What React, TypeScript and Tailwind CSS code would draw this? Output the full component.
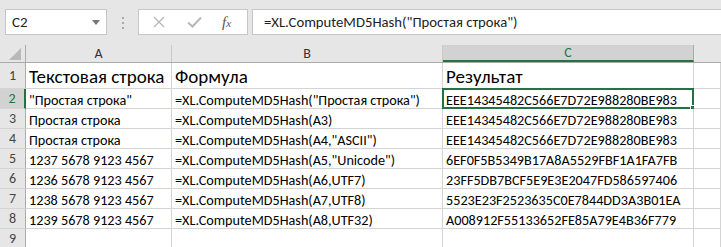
import React from 'react';

const FONT = { fontFamily: 'Calibri, Carlito, Lato, "Liberation Sans", sans-serif' };

const ROWS: [string, string, string][] = [
  ['"Простая строка"', '=XL.ComputeMD5Hash("Простая строка")', 'EEE14345482C566E7D72E988280BE983'],
  ['Простая строка', '=XL.ComputeMD5Hash(A3)', 'EEE14345482C566E7D72E988280BE983'],
  ['Простая строка', '=XL.ComputeMD5Hash(A4,"ASCII")', 'EEE14345482C566E7D72E988280BE983'],
  ['1237 5678 9123 4567', '=XL.ComputeMD5Hash(A5,"Unicode")', '6EF0F5B5349B17A8A5529FBF1A1FA7FB'],
  ['1236 5678 9123 4567', '=XL.ComputeMD5Hash(A6,UTF7)', '23FF5DB7BCF5E9E3E2047FD586597406'],
  ['1238 5678 9123 4567', '=XL.ComputeMD5Hash(A7,UTF8)', '5523E23F2523635C0E7844DD3A3B01EA'],
  ['1239 5678 9123 4567', '=XL.ComputeMD5Hash(A8,UTF32)', 'A008912F55133652FE85A79E4B36F779'],
];

function FormulaBar() {
  return (
    <div className="flex h-[45px] items-start pt-[9px] pl-[5px]">
      {/* name box */}
      <div className="flex h-[26px] w-[102px] items-center justify-between border border-[#c6c6c6] bg-white pl-[6px] pr-[6px] text-[15px] text-[#222]">
        <span>C2</span>
        <svg width="8" height="5" viewBox="0 0 8 5"><path d="M0 0h8L4 5z" fill="#777" /></svg>
      </div>
      <div className="flex w-[31px] flex-col items-center justify-center gap-[3px] pt-[8px]">
        <span className="h-[2px] w-[2px] bg-[#aaa]" />
        <span className="h-[2px] w-[2px] bg-[#aaa]" />
        <span className="h-[2px] w-[2px] bg-[#aaa]" />
      </div>
      {/* cancel / enter / fx */}
      <div className="flex h-[26px] w-[110px] items-center border border-[#c6c6c6] bg-white pl-[14px]">
        <svg width="12" height="12" viewBox="0 0 12 12"><path d="M1 1l10 10M11 1L1 11" stroke="#b8b8b8" strokeWidth="1.4" /></svg>
        <svg className="ml-[22px]" width="15" height="12" viewBox="0 0 15 12"><path d="M1 6.5l4.5 4L14 1.5" stroke="#b8b8b8" strokeWidth="2" fill="none" /></svg>
        <span className="ml-[20px] text-[15px] italic text-[#555]" style={{ fontFamily: '"Liberation Serif", serif' }}>
          f<span className="text-[11px]">x</span>
        </span>
      </div>
      {/* formula input */}
      <div className="ml-[4px] flex h-[26px] flex-1 items-center border border-r-0 border-[#c6c6c6] bg-white pl-[11px] text-[14.7px] text-[#222]">
        =XL.ComputeMD5Hash("Простая строка")
      </div>
    </div>
  );
}

function ColHeader({ label, w, active }: { label: string; w: string; active?: boolean }) {
  return (
    <div
      className={`flex h-full shrink-0 items-center justify-center border-r text-[14px] ${w} ${
        active
          ? 'border-[#ababab] bg-[#d2d2d2] text-[#217346] border-b-2 border-b-[#217346]'
          : 'border-[#c9c9c9] text-[#333]'
      }`}
    >
      {label}
    </div>
  );
}

function RowHeader({ n, active }: { n: number; active?: boolean }) {
  return (
    <div
      className={`flex h-full w-[26px] shrink-0 items-center justify-center border-b border-[#d4d4d4] text-[14px] ${
        active ? 'border-r-2 border-r-[#217346] bg-[#d2d2d2] text-[#217346]' : 'border-r border-r-[#ababab] text-[#444]'
      }`}
    >
      {n}
    </div>
  );
}

function Cell({ w, children, big, selected }: { w: string; children?: React.ReactNode; big?: boolean; selected?: boolean }) {
  return (
    <div
      className={`relative flex h-full shrink-0 items-end whitespace-nowrap border-r border-b border-[#d4d4d4] bg-white pl-[3px] leading-none text-black ${w} ${
        big ? 'pb-[2px] text-[19px]' : 'pb-[1px] text-[14.2px]'
      }`}
    >
      {children}
      {selected && (
        <div className="pointer-events-none absolute -left-px -top-px -right-px -bottom-px border-2 border-[#217346]">
          <div className="absolute -right-[4px] -bottom-[4px] h-[6px] w-[6px] border border-white bg-[#217346]" />
        </div>
      )}
    </div>
  );
}

export default function App() {
  return (
    <div className="h-[247px] w-[721px] overflow-hidden bg-[#e6e6e6]" style={FONT}>
      <FormulaBar />
      {/* column headers */}
      <div className="flex h-[18px] border-b border-[#ababab]">
        <div className="relative flex h-full w-[26px] shrink-0 items-end justify-end border-r border-[#ababab] pr-[4px] pb-[2px]">
          <svg width="12" height="12" viewBox="0 0 12 12"><path d="M12 0v12H0z" fill="#b8b8b8" /></svg>
        </div>
        <ColHeader label="A" w="w-[146px]" />
        <ColHeader label="B" w="w-[271px]" />
        <ColHeader label="C" w="w-[251px]" active />
        <div className="flex-1" />
      </div>
      {/* row 1 */}
      <div className="flex h-[26px]">
        <RowHeader n={1} />
        <Cell w="w-[146px]" big>Текстовая строка</Cell>
        <Cell w="w-[271px]" big>Формула</Cell>
        <Cell w="w-[251px]" big>Результат</Cell>
        <Cell w="flex-1" />
      </div>
      {ROWS.map((r, i) => (
        <div className="flex h-[20px]" key={i}>
          <RowHeader n={i + 2} active={i === 0} />
          <Cell w="w-[146px]">{r[0]}</Cell>
          <Cell w="w-[271px]">{r[1]}</Cell>
          <Cell w="w-[251px]" selected={i === 0}>{r[2]}</Cell>
          <Cell w="flex-1" />
        </div>
      ))}
      <div className="flex h-[20px]">
        <RowHeader n={9} />
        <Cell w="w-[146px]" />
        <Cell w="w-[271px]" />
        <Cell w="w-[251px]" />
        <Cell w="flex-1" />
      </div>
    </div>
  );
}
